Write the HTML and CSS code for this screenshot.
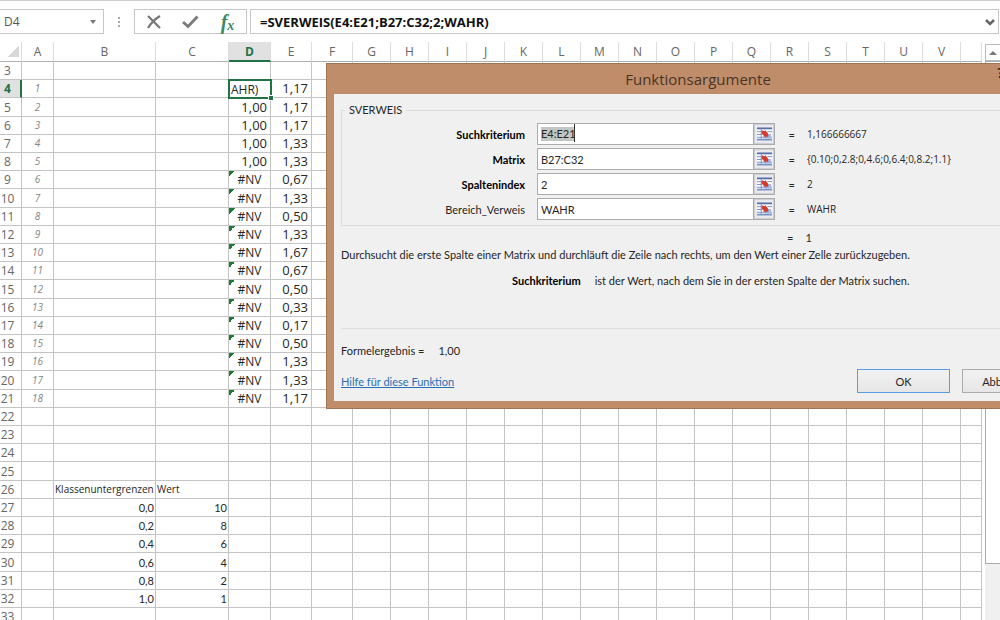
FILE: index.html
```html
<!DOCTYPE html>
<html lang="de">
<head>
<meta charset="utf-8">
<title>Tabelle – Funktionsargumente</title>
<link rel="stylesheet" href="styles.css">
</head>
<body>
<svg class="defs" aria-hidden="true">
  <symbol id="range" viewBox="0 0 16 14">
    <rect x="0" y="0" width="16" height="14" fill="#fff"/>
    <path d="M0 0H16V2H0z" fill="#5a6fa8"/>
    <path d="M0 12H16V14H0z" fill="#7f93c0"/>
    <path d="M0 4.500H5M0 7.500H5M0 10.500H16M11 4.500H16M4.500 2V12M9.500 9V12" stroke="#6f8fc9" stroke-width="1"/>
    <path d="M10 7H15V12H10z" fill="#9dbbe8"/>
    <path d="M5 3L8 4L9 3L12 7V10H7V8L5 7z" fill="#d63a2a"/>
  </symbol>
</svg>
<div class="app">
  <header class="formula-bar">
    <button class="name-box" type="button"><span>D4</span><i class="caret"></i></button>
    <span class="grip"><i></i><i></i><i></i></span>
    <div class="tools">
      <button type="button" aria-label="Abbrechen"><svg width="16" height="14" viewBox="0 0 16 14"><path d="M2 1L14 13M14 1C9 4 5 8 2 13" fill="none" stroke="#777" stroke-width="2.200"/></svg></button>
      <button type="button" aria-label="Eingeben"><svg width="17" height="14" viewBox="0 0 17 14"><path d="M1 7L6 11.500L15.500 1.500" fill="none" stroke="#7c7c7c" stroke-width="3"/></svg></button>
      <button class="fx" type="button" aria-label="Funktion einfügen">f<sub>x</sub></button>
    </div>
    <div class="formula">
      <input type="text" aria-label="Formel" value="=SVERWEIS(E4:E21;B27:C32;2;WAHR)">
      <button type="button" aria-label="Erweitern"><svg width="10" height="7" viewBox="0 0 10 7"><path d="M1 1L5 5L9 1" fill="none" stroke="#666" stroke-width="2.500"/></svg></button>
    </div>
  </header>

  <main class="sheet">
    <table class="grid">
      <colgroup id="cols"></colgroup>
      <thead><tr id="heads"></tr></thead>
      <tbody id="rows"></tbody>
    </table>
    <div class="scroll">
      <button type="button" aria-label="Nach oben"><i class="up"></i></button>
      <div class="track"><div class="thumb"></div></div>
    </div>

    <section class="dialog" role="dialog" aria-labelledby="dlg-title">
      <div class="titlebar"><h1 id="dlg-title">Funktionsargumente</h1><span class="help">?</span></div>
      <form class="body">
        <fieldset>
          <legend>SVERWEIS</legend>
          <div class="args">
            <label class="req" for="a1">Suchkriterium</label>
            <div class="field"><input class="marked" id="a1" type="text" value="E4:E21"><button type="button" aria-label="Bereich wählen"><svg><use href="#range"/></svg></button></div>
            <span>=</span><output>1,166666667</output>
            <label class="req" for="a2">Matrix</label>
            <div class="field"><input id="a2" type="text" value="B27:C32"><button type="button" aria-label="Bereich wählen"><svg><use href="#range"/></svg></button></div>
            <span>=</span><output>{0.10;0,2.8;0,4.6;0,6.4;0,8.2;1.1}</output>
            <label class="req" for="a3">Spaltenindex</label>
            <div class="field"><input id="a3" type="text" value="2"><button type="button" aria-label="Bereich wählen"><svg><use href="#range"/></svg></button></div>
            <span>=</span><output>2</output>
            <label for="a4">Bereich_Verweis</label>
            <div class="field"><input id="a4" type="text" value="WAHR"><button type="button" aria-label="Bereich wählen"><svg><use href="#range"/></svg></button></div>
            <span>=</span><output>WAHR</output>
          </div>
        </fieldset>
        <div class="result"><span>=</span><output>1</output></div>
        <p>Durchsucht die erste Spalte einer Matrix und durchläuft die Zeile nach rechts, um den Wert einer Zelle zurückzugeben.</p>
        <div class="hint"><b>Suchkriterium</b><span>ist der Wert, nach dem Sie in der ersten Spalte der Matrix suchen.</span></div>
        <div class="total"><span>Formelergebnis =</span><output>1,00</output></div>
        <div class="actions">
          <a href="#hilfe">Hilfe für diese Funktion</a>
          <button class="primary" type="button">OK</button>
          <button type="button">Abbrechen</button>
        </div>
      </form>
    </section>
  </main>
</div>
<script src="script.js"></script>
</body>
</html>
```
FILE: styles.css
```css
* { box-sizing: border-box; }
body {
  margin: 0;
  background: #fff;
  color: #262626;
  font-family: "Open Sans", "Noto Sans", sans-serif;
  font-size: 11px;
}
button, input { font: inherit; color: inherit; border-radius: 0; padding: 0; }
button { border: 0; background: none; }
.defs { display: none; }
.app {
  height: 100vh;
  display: flex;
  flex-direction: column;
  overflow: hidden;
  border-top: 1px solid #cfcdcd;
}

/* formula bar */
.formula-bar {
  display: flex;
  flex: none;
  height: 33px;
  padding: 8px 1px 0 0;
}
.name-box, .tools, .formula { border: 1px solid #c6c6c6; display: flex; align-items: center; }
.name-box {
  width: 104px;
  border-left: 0;
  padding: 0 7px 0 4px;
  justify-content: space-between;
  font-size: 12px;
  color: #555;
}
.caret { border: 3px solid transparent; border-top: 4px solid #777; border-bottom: 0; }
.grip { width: 30px; display: flex; flex-direction: column; align-items: center; justify-content: center; gap: 2px; }
.grip i { width: 2px; height: 2px; background: #aaa; }
.tools { width: 113px; justify-content: space-around; margin-right: 3px; }
.tools button { display: flex; width: 36px; justify-content: center; align-items: center; }
.tools .fx { display: block; color: #3d8a5f; font: italic bold 20px/20px "Liberation Serif", serif; }
.fx sub { font-size: 14px; line-height: 1px; vertical-align: -1px; }
.formula { flex: 1; padding: 0 3px 0 9px; }
.formula input { flex: 1; border: 0; outline: 0; background: none; color: #111; font-size: 13px; font-weight: 700; }

/* sheet */
.sheet { position: relative; display: flex; flex: 1; min-height: 0; overflow: hidden; padding-top: 8px; }
.grid { flex: 1; width: 0; align-self: flex-start; table-layout: fixed; border-collapse: separate; border-spacing: 0; }
.grid th, .grid td {
  height: 18px;
  padding: 0;
  border-right: 1px solid #c4c4c4;
  border-bottom: 1px solid #c4c4c4;
  line-height: 17px;
  white-space: nowrap;
  overflow: hidden;
}
.grid tbody tr:nth-child(5n + 3) > * { height: 19px; }
.grid th { color: #666; font-weight: 400; font-size: 12px; }
.grid thead th { height: 20px; border-right-color: #dcdcdc; border-bottom-color: #b0b0b0; }
.grid thead th:first-child { background: linear-gradient(135deg, #fff 50%, #d8d8d8 50%) 8px 4px / 11px 11px no-repeat; }
.grid tbody th { text-align: center; padding-right: 6px; }
.grid thead .on { background: #e1e1e1; color: #217346; font-weight: 700; border-bottom: 2px solid #217346; }
.grid tbody .on { background: #e1e1e1; color: #217346; font-weight: 700; border-right: 2px solid #217346; padding-right: 5px; }
.grid .no { text-align: center; font-size: 10px; font-style: italic; color: #858585; }
.grid .num { text-align: right; font-size: 13px; padding-right: 3px; }
.grid .err { text-align: center; font-size: 12px; background: linear-gradient(135deg, #1f7a35 50%, transparent 50%) 0 0 / 6px 6px no-repeat; }
.grid .small { font-family: Lato, sans-serif; font-size: 11px; padding: 0 2px; }
.grid .caption { font-size: 10px; padding: 0 1px; }
.grid .right { text-align: right; padding-right: 1px; }
.grid .active { position: relative; overflow: visible; border: 0; font-size: 12px; padding: 0 2px; outline: 2px solid #217346; outline-offset: -1px; }
.active::after { content: ""; position: absolute; right: -2px; bottom: -2px; width: 4px; height: 4px; background: #217346; box-shadow: 0 0 0 1px #fff; }

.scroll { width: 18px; padding-left: 3px; display: flex; flex-direction: column; }
.scroll button { height: 17px; margin-top: 2px; border: 1px solid #bbb; border-right: 0; display: grid; place-items: center; }
.up { border: 4px solid transparent; border-bottom: 4px solid #777; border-top: 0; }
.track { flex: 1; background: #f0f0f0; }
.thumb { height: 90%; background: #fff; border: 1px solid #ababab; border-right: 0; }

/* dialog */
.dialog {
  position: absolute;
  top: 29px;
  left: 326px;
  width: 744px;
  padding: 0 7px 7px;
  background: #bf8d69;
  border: 1px solid #9f7452;
  font-family: Lato, "Noto Sans", sans-serif;
}
.titlebar { display: flex; justify-content: center; height: 30px; align-items: center; position: relative; }
.titlebar h1 { margin: 0; font-family: "Open Sans", sans-serif; font-size: 15px; font-weight: 400; line-height: 20px; color: #4a3426; }
.help { position: absolute; left: 663px; top: 0; font-size: 14px; font-weight: 700; color: #222; }
.body { background: #f0f0f0; padding: 9px 7px 8px; }
fieldset { margin: 0; padding: 6px 0 5px; border: 1px solid #dcdcdc; min-width: 0; }
legend { margin-left: 3px; padding: 0 4px; line-height: 14px; }
.args { display: grid; grid-template-columns: 183px 238px 8px 1fr; column-gap: 12px; row-gap: 3px; align-items: center; }
.args label { text-align: right; }
.args span { text-align: right; }
.args output { font-family: "Open Sans", sans-serif; font-size: 10px; }
.args .req, .hint b { font-weight: 700; color: #000; }
.field { display: flex; height: 22px; border: 1px solid #ababab; background: #fff; }
.field input { flex: 1; min-width: 0; border: 0; outline: 0; padding-left: 3px; background: none; }
.field .marked { flex: none; width: 37px; background: linear-gradient(#c3c7c3, #c3c7c3) 3px 3px / 33px 14px no-repeat; border-right: 1px solid #333; margin-right: auto; height: 18px; }
.field button { width: 21px; background: #e9e9ee; border-left: 1px solid #ababab; box-shadow: inset 0 0 0 1px #cdcdd5; display: grid; place-items: center; }
.field svg { width: 15px; height: 14px; }
.result { display: flex; gap: 12px; padding-left: 446px; margin-top: 4px; line-height: 16px; }
.body p { margin: 1px 0 0; line-height: 16px; }
.hint { display: flex; gap: 14px; padding: 10px 0 39px 171px; line-height: 16px; border-bottom: 1px solid #dedede; }
.total { display: flex; gap: 14px; margin-top: 14px; line-height: 16px; }
.actions { display: flex; align-items: center; gap: 12px; margin-top: 10px; }
.actions a { color: #2a6fb5; margin-right: auto; }
.actions button { width: 93px; height: 24px; border: 1px solid #ababab; background: linear-gradient(#f2f2f2, #e6e6e6); }
.actions button.primary { border-color: #569de5; }
```
FILE: script.js
```javascript
const names = "ABCDEFGHIJKLMNOPQRSTUVW".split("");
const widths = { A: 32, B: 102, C: 73, D: 42, E: 41, F: 41, W: null };
const cells = {};
const put = (ref, text, cls) => { cells[ref] = { text, cls }; };

const e = "1,17 1,17 1,17 1,33 1,33 0,67 1,33 0,50 1,33 1,67 0,67 0,50 0,33 0,17 0,50 1,33 1,33 1,17".split(" ");
e.forEach((value, i) => {
  const row = i + 4;
  put("A" + row, i + 1, "no");
  put("E" + row, value, "num");
  if (row === 4) put("D4", "AHR)", "active");
  else if (row < 9) put("D" + row, "1,00", "num");
  else put("D" + row, "#NV", "err");
});
put("B26", "Klassenuntergrenzen", "caption");
put("C26", "Wert", "caption");
[["0,0", 10], ["0,2", 8], ["0,4", 6], ["0,6", 4], ["0,8", 2], ["1,0", 1]].forEach(([limit, value], i) => {
  put("B" + (27 + i), limit, "small right");
  put("C" + (27 + i), value, "small right");
});

const add = (parent, tag, text = "", cls = "") => {
  const el = document.createElement(tag);
  el.textContent = text;
  if (cls) el.className = cls;
  parent.append(el);
  return el;
};

const cols = document.getElementById("cols");
const heads = document.getElementById("heads");
add(cols, "col").style.width = "22px";
add(heads, "th");
names.forEach(name => {
  const col = add(cols, "col");
  const width = name in widths ? widths[name] : 38;
  if (width) col.style.width = width + "px";
  add(heads, "th", name === "W" ? "" : name, name === "D" ? "on" : "");
});

const body = document.getElementById("rows");
for (let row = 3; row <= 33; row++) {
  const tr = add(body, "tr");
  add(tr, "th", row, row === 4 ? "on" : "");
  names.forEach(name => {
    const cell = cells[name + row] || {};
    add(tr, "td", cell.text, cell.cls);
  });
}
```
